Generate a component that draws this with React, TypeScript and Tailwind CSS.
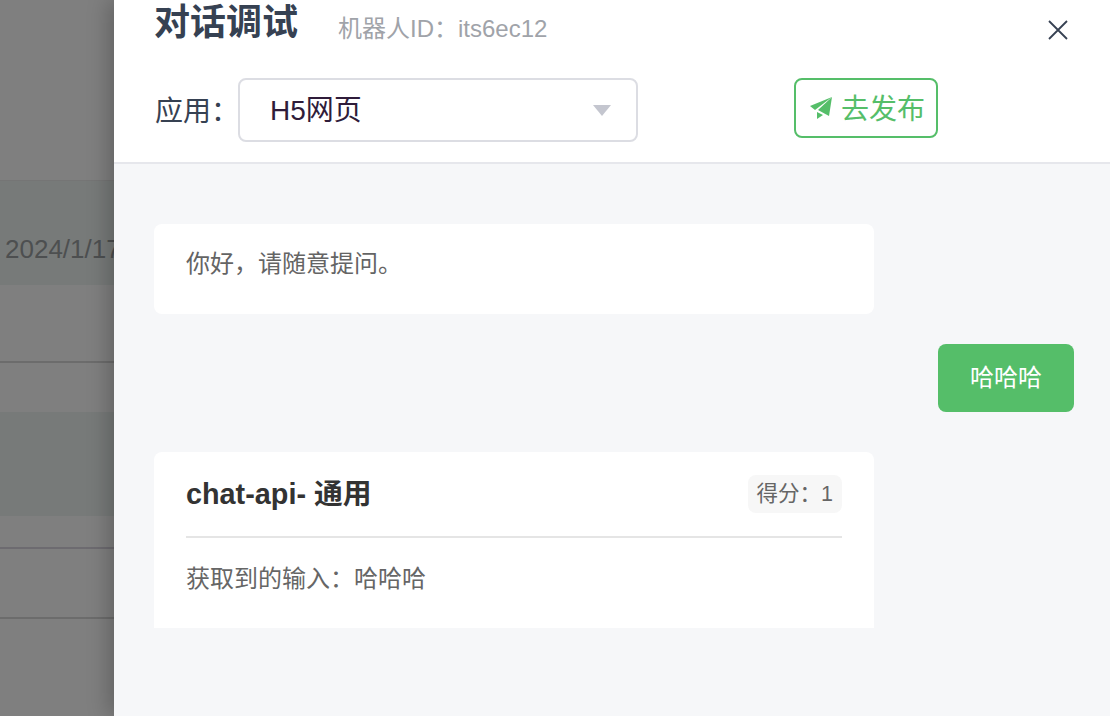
const sans = "font-['Liberation_Sans','Noto_Sans_CJK_SC',sans-serif]";

function SendIcon() {
  return (
    <svg width="23" height="23" viewBox="0 0 23 23" className="shrink-0 text-[#55be69]" fill="currentColor">
      <path d="M0 9 22 0 5 13Z" />
      <path d="M22 0 19 19 8 13Z" />
      <path d="M7 15 13 18 7 22Z" />
    </svg>
  );
}

function CloseIcon() {
  return (
    <svg width="22" height="22" viewBox="0 0 22 22" fill="none" stroke="#364152" strokeWidth="1.8">
      <path d="M2 2 20 20M20 2 2 20" />
    </svg>
  );
}

/* behind the overlay */
function Backdrop() {
  return (
    <div className="w-[114px] shrink-0 overflow-hidden bg-[#7f7f7f]">
      <div className="h-[181px] border-b border-[#757575]" />
      <div className="h-[104px] bg-[#777a79] pt-[53px] pl-[5px] text-[26px] leading-[30px] whitespace-nowrap text-[#4d4f50]">
        2024/1/17
      </div>
      <div className="h-[78px] border-b-2 border-[#6c6c6c]" />
      <div className="h-[49px]" />
      <div className="h-[104px] bg-[#777a79]" />
      <div className="h-[33px] border-b-2 border-[#6d6b70]" />
      <div className="h-[70px] border-b-2 border-[#6c6c6c]" />
    </div>
  );
}

export default function App() {
  return (
    <div className={`flex h-[716px] w-[1110px] overflow-hidden bg-[#7f7f7f] ${sans}`}>
      <Backdrop />

      <div className="relative flex min-w-0 flex-1 flex-col bg-[#f6f7f9] shadow-[-6px_0_20px_rgba(0,0,0,0.22)]">
        {/* Header */}
        <header className="h-[164px] shrink-0 border-b-2 border-[#e6e7ec] bg-white pl-[41px]">
          <div className="flex h-[46px] items-start">
            <h1 className="mt-[1px] -ml-[1px] text-[36px] leading-[44px] font-semibold whitespace-nowrap text-[#364152]">对话调试</h1>
            <span className="mt-[14px] ml-[40px] text-[24px] leading-[30px] whitespace-nowrap text-[#a0a3a9]">机器人ID：its6ec12</span>
            <button className="mt-[19px] mr-[41px] ml-auto">
              <CloseIcon />
            </button>
          </div>
          <div className="mt-[32px] flex items-start">
            <span className="mt-[17px] w-[83px] text-[28px] leading-[34px] whitespace-nowrap text-[#364152]">应用：</span>
            <div className="flex h-[64px] w-[400px] items-center justify-between rounded-[8px] border-2 border-[#dcdde3] pr-[25px] pl-[30px]">
              <span className="pt-[2px] text-[28px] text-[#2f1c3a]">H5网页</span>
              <span className="h-0 w-0 border-x-[9px] border-t-[11px] border-x-transparent border-t-[#c4c6cf]" />
            </div>
            <button className="ml-[156px] flex h-[60px] w-[144px] items-center gap-[8px] rounded-[8px] border-2 border-[#55be69] bg-white pl-[14px] text-[28px] whitespace-nowrap text-[#55be69]">
              <SendIcon />
              <span className="pt-[3px]">去发布</span>
            </button>
          </div>
        </header>

        {/* Conversation */}
        <main className="flex flex-1 flex-col pt-[60px] pr-[36px] pl-[40px]">
          <div className="flex h-[90px] w-[720px] items-center rounded-[8px] bg-white pb-[10px] pl-[32px] text-[24px] text-[#646464]">
            你好，请随意提问。
          </div>

          <div className="mt-[30px] flex justify-end">
            <div className="flex h-[68px] w-[136px] items-center justify-center rounded-[8px] bg-[#55be69] text-[24px] text-white">
              哈哈哈
            </div>
          </div>

          <div className="mt-[40px] h-[176px] w-[720px] rounded-t-[8px] bg-white px-[32px] pt-[23px]">
            <div className="flex h-[63px] items-start justify-between border-b-2 border-[#e5e5e5]">
              <span className="text-[28.8px] leading-[38px] font-bold whitespace-nowrap text-[#333333]">chat-api- 通用</span>
              <span className="flex h-[38px] items-center rounded-[8px] bg-[#f7f7f7] px-[9px] text-[21.5px] whitespace-nowrap text-[#666666]">得分：1</span>
            </div>
            <p className="mt-[24px] text-[24px] leading-[34px] text-[#666666]">获取到的输入：哈哈哈</p>
          </div>
        </main>
      </div>
    </div>
  );
}
